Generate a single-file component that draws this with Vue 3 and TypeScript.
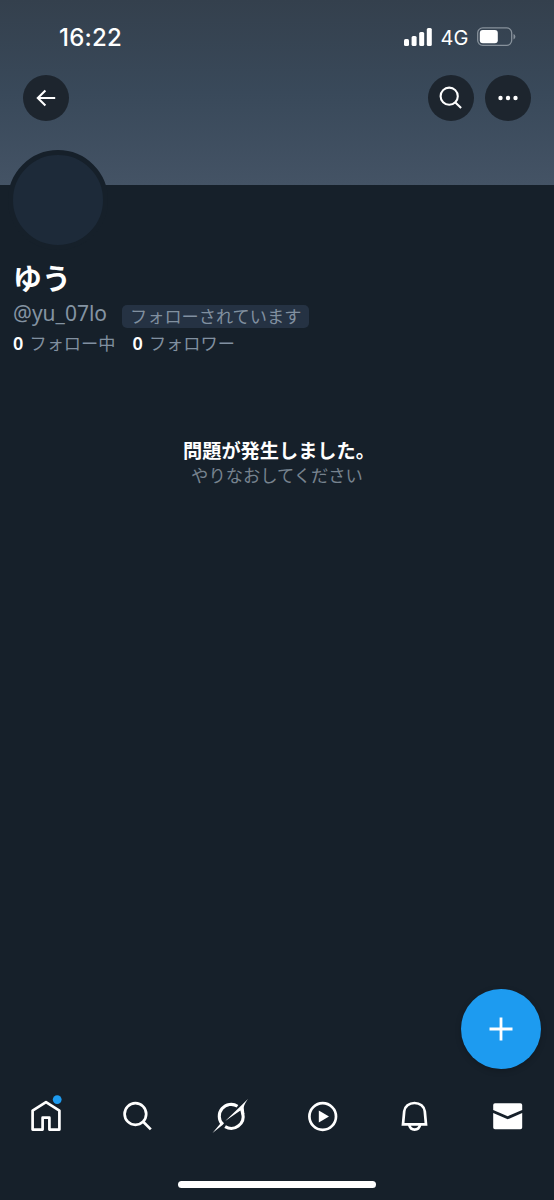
<script setup lang="ts">
interface Stat {
  count: number
  label: string
}

type TabName = 'home' | 'search' | 'grok' | 'video' | 'bell' | 'mail'

const stats: Stat[] = [
  { count: 0, label: 'フォロー中' },
  { count: 0, label: 'フォロワー' },
]

const tabs: TabName[] = ['home', 'search', 'grok', 'video', 'bell', 'mail']
</script>

<template>
  <main class="screen">
    <header class="banner">
      <div class="status">
        <span class="time">16:22</span>
        <div class="indicators">
          <svg class="signal" width="28" height="18" viewBox="0 0 28 18" fill="#fff">
            <rect x="0" y="11" width="5" height="7" rx="1.5" />
            <rect x="7.6" y="8" width="5" height="10" rx="1.5" />
            <rect x="15.2" y="4" width="5" height="14" rx="1.5" />
            <rect x="22.8" y="0" width="5" height="18" rx="1.5" />
          </svg>
          <span class="network">4G</span>
          <svg class="battery" width="39" height="20" viewBox="0 0 39 20">
            <rect x=".7" y=".9" width="34" height="17.4" rx="5" fill="none" stroke="#87919b" stroke-width="1.3" />
            <rect x="2.8" y="3" width="18" height="13.2" rx="3" fill="#fff" />
            <path d="M36.5 7v5.4q1.9-.8 1.9-2.7T36.5 7z" fill="#87919b" />
          </svg>
        </div>
      </div>
      <div class="actions">
        <button class="round" aria-label="戻る">
          <svg width="46" height="46" viewBox="0 0 46 46" fill="none" stroke="#fff" stroke-width="2.1">
            <path d="M32.2 23H15M22.4 15.4 14.8 23l7.6 7.6" />
          </svg>
        </button>
        <div class="group">
          <button class="round" aria-label="検索">
            <svg width="46" height="46" viewBox="0 0 46 46" fill="none" stroke="#fff" stroke-width="2.1">
              <circle cx="21.2" cy="21.2" r="8.6" />
              <path d="m27.4 27.4 5.7 5.7" />
            </svg>
          </button>
          <button class="round" aria-label="その他">
            <svg width="46" height="46" viewBox="0 0 46 46" fill="#fff">
              <circle cx="15.5" cy="23" r="2.2" />
              <circle cx="23" cy="23" r="2.2" />
              <circle cx="30.5" cy="23" r="2.2" />
            </svg>
          </button>
        </div>
      </div>
    </header>

    <section class="profile">
      <div class="avatar"></div>
      <h1 class="name">ゆう</h1>
      <div class="identity">
        <span class="handle">@yu_07lo</span>
        <span class="badge">フォローされています</span>
      </div>
      <div class="stats">
        <span v-for="stat in stats" :key="stat.label" class="stat">
          <b>{{ stat.count }}</b><span>{{ stat.label }}</span>
        </span>
      </div>
    </section>

    <section class="message">
      <h2>問題が発生しました。</h2>
      <p>やりなおしてください</p>
    </section>

    <button class="compose" aria-label="作成">
      <svg width="24" height="24" viewBox="0 0 24 24" stroke="#fff" stroke-width="2.8">
        <path d="M12 .5v23M.5 12h23" />
      </svg>
    </button>

    <nav class="tabs">
      <a v-for="tab in tabs" :key="tab" class="tab">
        <svg width="40" height="40" viewBox="0 0 40 40" fill="none" stroke="#fff" stroke-width="2.7">
          <g v-if="tab === 'home'">
            <path stroke-linejoin="round" d="M6.6 14.6 20 6.2l13.4 8.4v19H23.4V21.7h-6.8v11.9H6.6z" />
            <circle cx="31.2" cy="3.6" r="4.4" fill="#1d9bf0" stroke="none" />
          </g>
          <g v-else-if="tab === 'search'">
            <circle cx="17.4" cy="18" r="10.8" />
            <path d="m25.2 25.8 7.6 7.6" />
          </g>
          <g v-else-if="tab === 'grok'">
            <path stroke-width="3.1" d="M11.3 28.2A11.9 11.9 0 0 1 26.5 10.2M14.1 30.6A11.9 11.9 0 0 0 31.8 17.6" />
            <path fill="#fff" stroke="none" d="M14.2 25 27.2 12.6 36.9 3C33.6 8.2 32.7 9.8 32.8 12.6L33.4 18 30.3 18.6 29.4 14.5zM1.5 37 9.2 27.8 9.3 24.6 12.7 26.7C13.1 27.3 12.6 28 11.5 29z" />
          </g>
          <g v-else-if="tab === 'video'">
            <circle cx="19.7" cy="20.5" r="13.3" />
            <path d="M15.8 14.5v12l10.2-6z" fill="#fff" stroke="none" />
          </g>
          <g v-else-if="tab === 'bell'">
            <path d="M8 28.3 9.2 15.4C9.8 10.4 14 7 19.5 7s9.7 3.4 10.3 8.4L31 28.3z" />
            <path d="M14.1 28.6c.7 3.4 2.7 5.1 5.5 5.1s4.9-1.7 5.6-5.1" />
          </g>
          <g v-else fill="#fff" stroke="none">
            <path d="M5.2 14V9q0-1.8 1.8-1.8h25.4q1.8 0 1.8 1.8v5l-14.5 6.2z" />
            <path d="M5.2 17v14.5q0 1.8 1.8 1.8h25.4q1.8 0 1.8-1.8V17l-14.5 6.3z" />
          </g>
        </svg>
      </a>
    </nav>
    <div class="home-bar"></div>
  </main>
</template>

<style>
body {
  background: #16202a;
}
</style>

<style scoped>
.screen {
  display: flex;
  flex-direction: column;
  width: 554px;
  height: 1200px;
  overflow: hidden;
  background: #16202a;
  color: #fff;
  font-family: Inter, "Noto Sans CJK JP", sans-serif;
}
button {
  border: 0;
  padding: 0;
}
svg {
  display: block;
}
.banner {
  box-sizing: border-box;
  height: 185px;
  padding: 22px 22.6px 0 22.6px;
  background: linear-gradient(#34404d, #39495a 50%, #445365);
}
.status {
  display: flex;
  justify-content: space-between;
  height: 30px;
  align-items: center;
  padding: 0 15px 0 36.4px;
}
.time {
  font-size: 24px;
  font-weight: 500;
  letter-spacing: 0.2px;
}
.indicators {
  display: flex;
  align-items: center;
}
.network {
  margin: 1px 9px 0 8.5px;
  font-size: 20px;
  font-weight: 400;
}
.actions {
  display: flex;
  justify-content: space-between;
  margin-top: 23px;
}
.group {
  display: flex;
  gap: 11px;
}
.round {
  width: 46px;
  height: 46px;
  border-radius: 50%;
  background: #1d252e;
}
.profile {
  padding: 0 13px;
}
.avatar {
  width: 90px;
  height: 90px;
  margin: -35px 0 0 -5px;
  border: 5px solid #16202a;
  border-radius: 50%;
  background: #1d2a39;
}
.name {
  margin: 7px 0 0;
  font: 700 29px/40px "Noto Sans CJK JP", sans-serif;
}
.identity {
  display: flex;
  align-items: center;
  height: 28px;
  margin-top: 3px;
}
.handle {
  width: 109px;
  margin-top: -2px;
  color: #8493a2;
  font: 21px/28px "Noto Sans", sans-serif;
}
.badge {
  height: 23px;
  margin-top: 4px;
  padding: 0 8px;
  border-radius: 5px;
  background: #253243;
  color: #8190a0;
  font: 17.2px/21px "Noto Sans CJK JP", sans-serif;
}
.stats {
  display: flex;
  gap: 17px;
  margin-top: 2px;
  font: 17.2px/26px "Noto Sans CJK JP", sans-serif;
  color: #8190a0;
}
.stat {
  display: flex;
  gap: 6.2px;
}
.stat b {
  color: #fff;
  font-family: "Noto Sans", sans-serif;
  font-size: 18px;
  font-weight: 600;
}
.message {
  margin-top: 81px;
  text-align: center;
}
.message h2 {
  margin: 0;
  padding-left: 4px;
  font: 700 19.2px/26px "Noto Sans CJK JP", sans-serif;
}
.message p {
  margin: 0;
  color: #77838f;
  font: 17.3px/23px "Noto Sans CJK JP", sans-serif;
}
.compose {
  display: grid;
  place-items: center;
  width: 80px;
  height: 80px;
  margin: auto 13px 0 auto;
  border-radius: 50%;
  background: #1d9bf0;
  box-shadow: 0 2px 6px #0003;
}
.tabs {
  display: grid;
  grid-template-columns: repeat(6, 1fr);
  justify-items: center;
  margin-top: 27px;
}
.tab svg {
  overflow: visible;
}
.home-bar {
  width: 198px;
  height: 7px;
  margin: 45px auto 12px;
  border-radius: 4px;
  background: #fff;
}
</style>
